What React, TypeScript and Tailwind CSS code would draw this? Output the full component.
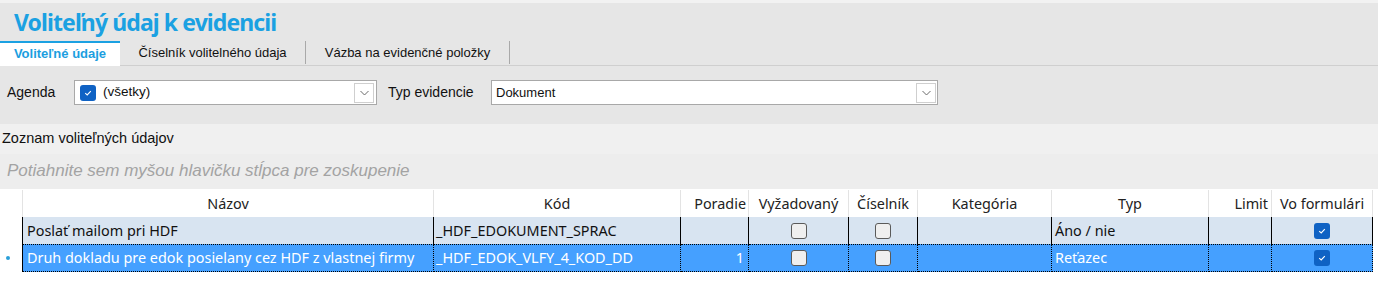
import React from "react";

const cols = "grid grid-cols-[23px_411px_247px_68px_100px_69px_134px_157px_63px_101px_1fr]";

const Check = ({ checked }: { checked: boolean }) =>
  checked ? (
    <span className="inline-flex h-4 w-4 items-center justify-center rounded-[3px] bg-[#0f62c4]">
      <svg width="10" height="10" viewBox="0 0 10 10">
        <path d="M2.2 5.2 L4.2 7 L7.8 3.2" fill="none" stroke="white" strokeWidth="1.1" />
      </svg>
    </span>
  ) : (
    <span className="inline-block h-4 w-4 rounded-[3px] border border-[#5a5a5a] bg-[#efefef]" />
  );

const Chevron = () => (
  <span className="flex h-[20px] w-[20px] items-center justify-center border border-[#cfcfcf] bg-white">
    <svg width="9" height="6" viewBox="0 0 9 6">
      <path d="M0.5 1 L4.5 5 L8.5 1" fill="none" stroke="#6b6b6b" strokeWidth="1" />
    </svg>
  </span>
);

const rows = [
  { name: "Poslať mailom pri HDF", code: "_HDF_EDOKUMENT_SPRAC", order: "", type: "Áno / nie", selected: false },
  { name: "Druh dokladu pre edok posielany cez HDF z vlastnej firmy", code: "_HDF_EDOK_VLFY_4_KOD_DD", order: "1", type: "Reťazec", selected: true },
];

const Header = () => {
  const h = "flex items-center border-r border-[#e3e3e3] whitespace-nowrap";
  return (
    <div className={`${cols} h-[28px] border-t border-white text-[#222]`}>
      <div className="border-r border-[#e3e3e3]" />
      <div className={`${h} justify-center`}>Názov</div>
      <div className={`${h} justify-center`}>Kód</div>
      <div className={`${h} justify-end pr-[2px]`}>Poradie</div>
      <div className={`${h} justify-center`}>Vyžadovaný</div>
      <div className={`${h} justify-center`}>Číselník</div>
      <div className={`${h} justify-center`}>Kategória</div>
      <div className={`${h} justify-center`}>Typ</div>
      <div className={`${h} justify-end pr-[3px]`}>Limit</div>
      <div className={`${h} justify-center`}>Vo formulári</div>
      <div />
    </div>
  );
};

export default function App() {
  return (
    <div className="h-[292px] w-full overflow-hidden bg-white font-['Liberation_Sans',Arial,sans-serif] text-[#111]">
      <div className="border-t-[3px] border-[#f2f2f2] bg-[#e6e6e6]">
        <div className="h-[38px] pl-[14px] pt-[4px] font-['Noto_Sans',sans-serif] text-[23px] font-bold leading-[30px] tracking-[-0.9px] text-[#1ba1e2]">
          Voliteľný údaj k evidencii
        </div>
        <div className="flex h-[25px] border-b border-[#cfcfcf] text-[13px]">
          <div className="-mb-px flex h-[25px] w-[120px] items-center justify-center border-t-2 border-[#1ba1e2] bg-white pb-[1px] font-bold text-[#1b9ee0]">
            Voliteľné údaje
          </div>
          <div className="flex h-[23px] w-[186px] items-center justify-center border-r border-[#a9a9a9]">
            Číselník volitelného údaja
          </div>
          <div className="flex h-[23px] w-[204px] items-center justify-center border-r border-[#a9a9a9]">
            Vázba na evidenčné položky
          </div>
        </div>
        <div className="flex h-[58px] items-start pt-[14px] text-[14px]">
          <div className="flex h-[25px] w-[74px] items-center pl-[7px]">Agenda</div>
          <div className="flex h-[25px] w-[303px] items-center border border-[#a8a8a8] bg-white pl-[5px] pr-[2px]">
            <Check checked />
            <span className="ml-[7px] flex-1 text-[13.5px]">(všetky)</span>
            <Chevron />
          </div>
          <div className="ml-[11px] flex h-[25px] w-[103px] items-center">Typ evidencie</div>
          <div className="flex h-[25px] w-[447px] items-center border border-[#a8a8a8] bg-white pl-[4px] pr-[1px]">
            <span className="flex-1 text-[13px]">Dokument</span>
            <Chevron />
          </div>
        </div>
      </div>
      <div className="flex h-[30px] items-center bg-[#f0f0f0] pl-[2px] text-[14.5px]">Zoznam voliteľných údajov</div>
      <div className="flex h-[35px] items-center bg-[#ededed] pl-[7px] pb-[1px] text-[17px] italic text-[#a3a3a3]">
        Potiahnite sem myšou hlavičku stĺpca pre zoskupenie
      </div>
      <div className="font-['Noto_Sans',sans-serif] text-[14.4px]">
        <Header />
        {rows.map((r) => {
          const tone = r.selected
            ? "bg-[#45a0ff] text-white border-t border-t-black border-dotted border-b border-b-black"
            : "bg-[#d8e4f1] text-[#111]";
          const cell = `flex items-center whitespace-nowrap border-r border-r-black ${tone}`;
          return (
            <div key={r.code} className={`${cols} ${r.selected ? "h-[28px]" : "h-[27px]"}`}>
              <div className="flex items-center border-r border-r-black bg-white pl-[6px]">
                {r.selected && <span className="h-[4px] w-[4px] rounded-full bg-[#2a9fd8]" />}
              </div>
              <div className={`${cell} pl-[4px]`}>{r.name}</div>
              <div className={`${cell} pl-[2px]`}>{r.code}</div>
              <div className={`${cell} justify-end pr-[4px]`}>{r.order}</div>
              <div className={`${cell} justify-center`}><Check checked={false} /></div>
              <div className={`${cell} justify-center`}><Check checked={false} /></div>
              <div className={cell} />
              <div className={`${cell} pl-[3px]`}>{r.type}</div>
              <div className={cell} />
              <div className={`${cell} justify-center`}><Check checked /></div>
              <div className="bg-white" />
            </div>
          );
        })}
      </div>
    </div>
  );
}
